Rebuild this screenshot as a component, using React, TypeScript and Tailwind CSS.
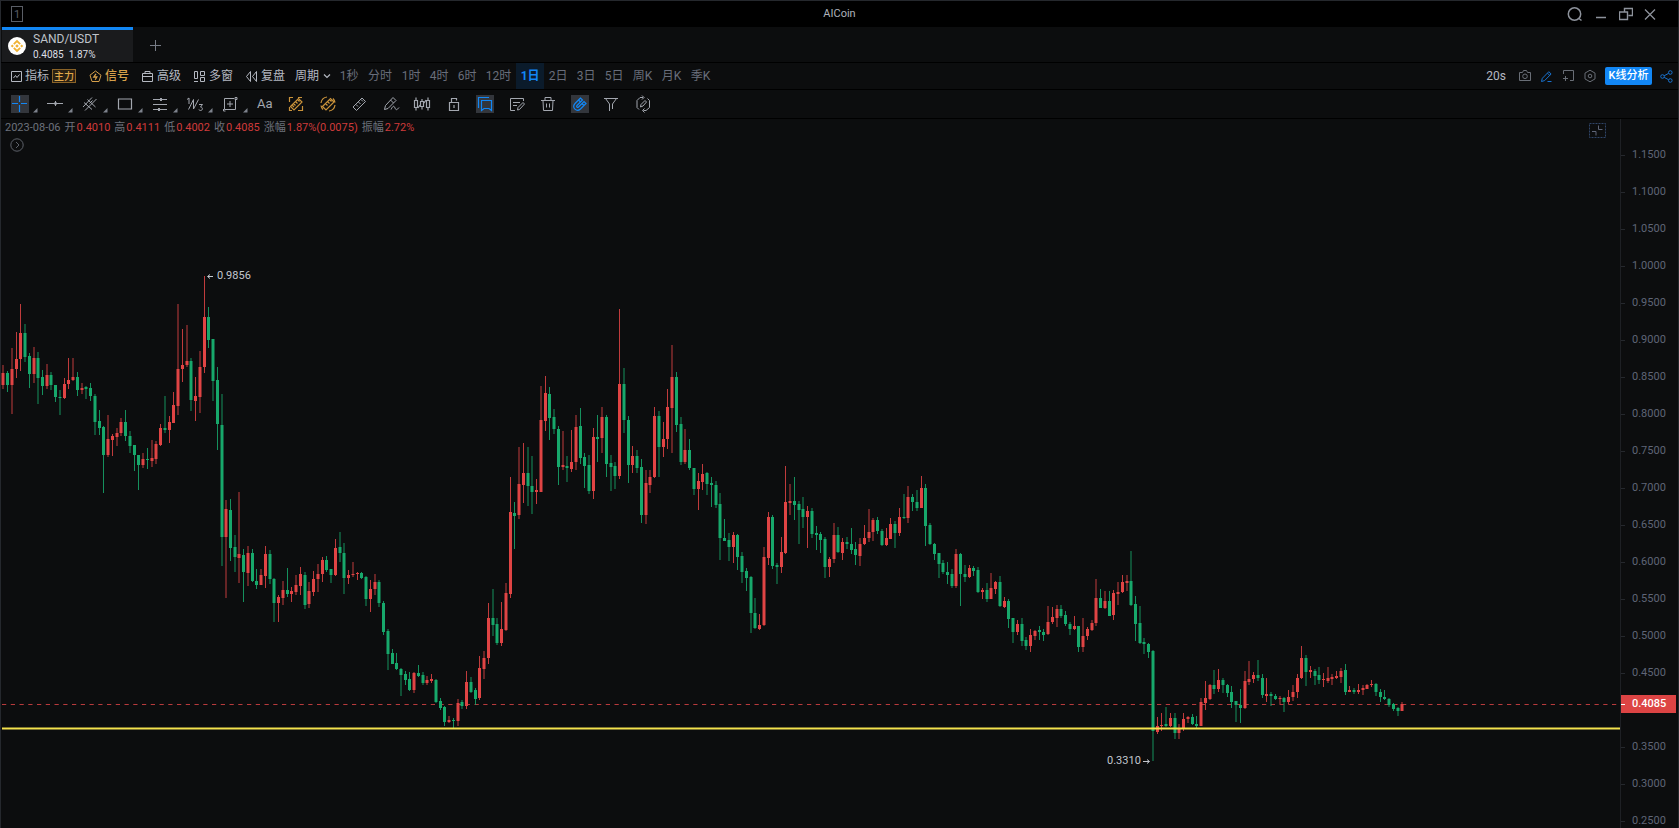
import React from 'react';
import clsx from 'clsx';

type IconProps = { children: React.ReactNode; size?: number; className?: string };

const Icon = ({ children, size = 18, className }: IconProps) => (
  <svg
    width={size}
    height={size}
    viewBox={`0 0 ${size} ${size}`}
    fill="none"
    stroke="currentColor"
    strokeWidth={1}
    className={clsx('shrink-0', className)}
    aria-hidden="true"
  >
    {children}
  </svg>
);

/* ---------- Candle data ---------- */

// Each candle: r/g, then high, body top, body bottom, low in thirds of a pixel below the block's base line
const BLOCKS = [
  {
    base: 141,
    rows:
      'r315,340,376,388 g332,340,376,395 r265,328,376,461 r217,297,328,353 r132,220,297,332 g193,220,290,307 g278,289,341,384 r262,293,341,370 g277,293,353,431 g331,351,378,404 ' +
      'r313,346,378,388 g335,346,376,389 g374,376,412,425 g391,412,415,465 r353,373,415,416 r295,359,373,387 r293,352,359,362 g337,351,391,408 r369,385,391,402 g378,381,386,416 ' +
      'g369,385,408,424 g402,408,486,524 g450,484,503,524 g498,501,586,698 r466,537,584,590 r521,529,539,587 r505,519,530,557 r473,487,520,527 g451,487,527,543 g513,528,557,580 ' +
      'g554,556,586,634 g584,585,614,690 r580,598,614,623 g564,598,601,626 r540,595,602,621 r544,553,597,612 r491,504,555,557 g408,503,510,520 r469,487,510,548 r396,435,488,490 ' +
      'r133,328,437,466 r207,315,328,365 r196,303,316,320 g293,303,420,453 r352,408,422,482 r274,322,410,458 r48,172,322,338 g140,172,240,263 g237,238,362,422 g321,359,493,569 ' +
      'g402,495,831,918 r721,747,830,1013 g717,749,863,903 g825,862,890,936 r697,883,893,969 g867,885,937,1025 r858,879,938,977 g866,879,963,966 g927,962,974,988 r928,946,974,976 ' +
      'r858,881,947,983 g870,881,957,972 g955,957,1028,1086 r1006,1011,1028,1087 r962,990,1013,1034 g924,990,1001,1010',
  },
  {
    base: 381,
    rows:
      'r261,273,281,306 r226,256,275,284 r201,223,258,285 g215,224,314,327 r247,273,311,323 r214,237,275,287 r192,221,238,276 r171,180,222,245 g168,180,209,215 g206,208,224,248 ' +
      'r118,143,224,227 g95,141,159,185 g130,158,233,281 r211,224,233,251 r187,221,225,231 r215,219,222,239 g216,219,234,237 g229,231,298,319 r240,266,298,335 r223,247,267,284 ' +
      'g241,247,308,320 g304,309,395,405 g388,393,461,510 g448,459,491,492 g459,489,507,509 g504,507,524,588 g513,522,540,556 g516,538,571,573 r515,520,571,580 g496,519,527,532 ' +
      'g517,525,549,556 r528,541,549,555 r522,538,543,549 g537,541,605,609 g594,604,624,629 g617,622,665,678 r648,660,665,670 g655,659,663,683 r597,610,662,677 g599,607,619,626 ' +
      'r514,546,617,626 g532,546,576,579 g565,570,597,615 r467,505,595,599 r454,473,507,536 r310,354,473,492 g267,354,375,407 g355,373,429,434 r307,388,428,437 r248,279,389,392',
  },
  {
    base: 171,
    rows:
      'r562,665,911,923 g636,668,677,776 r472,583,676,686 r460,549,584,639 g472,549,589,648 g499,588,605,673 r568,600,605,642 r289,390,605,607 r259,309,392,422 g291,311,383,449 ' +
      'g358,381,416,431 g408,416,530,584 r422,525,530,539 g498,528,535,577 r421,516,536,545 r376,410,517,539 g354,408,503,521 g490,502,527,594 g496,526,602,612 r415,442,602,627 ' +
      'g376,441,446,517 r352,381,445,488 g376,381,521,560 g495,519,530,602 g517,528,558,598 r57,283,558,568 g235,283,390,428 g379,390,524,578 r467,497,524,550 g479,497,533,549 ' +
      'g507,531,674,698 r539,580,674,703 r541,561,584,610 r350,377,561,565 g363,377,470,560 r396,447,470,501 r297,351,448,477 r166,261,353,490 g246,261,404,425 g381,403,515,524 ' +
      'r416,479,515,521 g447,479,534,541 g533,534,597,614 r549,573,597,661 r522,552,575,599 g545,549,582,614 g562,580,585,652 g573,584,645,655 g610,643,745,809 g687,744,752,754 ' +
      'g728,751,770,812 r727,736,771,818 g731,734,800,839 g787,798,845,880 g835,843,863,903 g859,861,970,1028 g924,969,1015,1017',
  },
  {
    base: 321,
    rows:
      'r522,555,566,570 r321,351,556,558 r217,231,353,374 g226,231,377,386 g370,375,380,431 r291,336,380,399 r78,186,338,342 r133,183,188,224 g111,183,195,240 g184,193,209,311 ' +
      'g171,207,230,264 r198,213,230,323 g205,213,281,293 g259,279,285,330 g277,283,299,338 g290,298,381,413 r352,357,381,411 r249,286,358,369 g261,286,337,338 r295,307,338,360 ' +
      'g292,306,313,326 g264,312,329,342 g306,327,346,374 r295,311,347,377 r255,293,312,314 r207,275,295,305 r234,240,276,302 g230,240,274,282 g268,273,314,317 r264,294,315,318 ' +
      'r235,252,296,298 g243,251,279,323 r205,231,279,287 g162,231,235,238 r137,172,234,249 g162,172,187,213 g150,186,203,212 r109,144,203,204 g132,144,258,318 g249,256,312,314 ' +
      'g310,312,342,359 g339,340,371,413 g359,369,396,403 g366,396,405,431 g388,402,437,443 r328,341,437,444 g340,342,402,498 g376,402,412,426 r376,385,412,414 g378,385,392,407 ' +
      'g380,390,456,458 r445,450,456,476 g428,450,476,486 r400,445,476,478 r422,427,446,461 g408,427,497,500 r471,483,500,503 g478,483,536,563',
  },
  {
    base: 411,
    rows:
      'g264,265,305,340 r270,283,305,314 g264,282,333,349 g321,330,347,360 r298,314,347,367 r301,303,318,331 g288,300,305,329 g297,305,315,333 r228,276,313,315 r231,261,276,282 ' +
      'r226,237,264,290 g224,237,257,263 g244,254,282,289 g276,282,298,315 r258,288,298,301 g288,289,350,366 r263,318,350,366 r291,297,318,330 r270,278,300,302 r148,204,279,287 ' +
      'g178,204,233,234 r183,213,234,237 g183,213,257,259 r179,189,256,269 r157,187,191,224 r134,157,187,190 r134,152,158,182 g63,152,225,228 g199,222,282,334 g227,280,338,342 ' +
      'g325,336,342,371 g339,341,365,383 g360,364,603,692 r561,588,606,613 r549,585,588,603 g531,582,588,591 r549,564,588,590 g549,564,610,626 r582,594,610,626 r549,567,597,603 ' +
      'r558,561,568,579 g552,561,582,585 g558,582,588,593 r504,517,587,589 r454,504,518,541 r462,464,507,510 g419,465,476,491 r417,450,476,487 g444,450,465,490 g462,464,489,501 ' +
      'g469,486,516,533 g513,514,525,577 g478,524,534,580 r423,454,535,538 r392,447,456,465 r427,435,447,459 g391,435,445,453 g433,443,496,503 r445,492,498,517',
  },
  {
    base: 481,
    rows:
      'g276,283,289,317 g281,288,297,301 r287,294,298,312 g291,293,305,335 r270,291,305,312 r254,275,292,302 r222,233,276,295 r138,175,235,237 g166,175,215,259 r199,211,216,235 ' +
      'g208,213,227,256 g202,226,239,252 r219,237,241,261 r201,235,242,248 r223,231,237,254 r213,228,233,237 r204,213,231,248 g193,211,275,284 r259,271,275,277 g264,270,275,283 ' +
      'r252,269,275,283 r256,264,271,286 r253,255,267,268 r240,251,255,261 g250,252,275,287 g267,275,292,305 g270,291,298,300 g294,296,316,320 g308,312,327,332 g320,324,332,347 ' +
      'r306,312,332,333',
  },
];

const CANDLES = BLOCKS.flatMap(({ base, rows }) =>
  rows.split(' ').map((row) => {
    const [high, top, bottom, low] = row
      .slice(1)
      .split(',')
      .map((v) => base + Math.round(Number(v) / 3));
    return { up: row[0] === 'r', high, top, bottom, low };
  }),
);

const STEP = 4.372;

const Candles = () => (
  <g>
    {CANDLES.map((c, i) => {
      const x = Math.round((2.15 + i * STEP) * 2) / 2;
      return (
        <g key={i} fill={c.up ? '#e04444' : '#17a86b'}>
          <rect x={x - 0.5} y={c.high} width={1} height={Math.max(c.low - c.high, 1)} opacity={0.85} />
          <rect x={x - 1.5} y={c.top} width={3} height={Math.max(c.bottom - c.top, 1)} />
        </g>
      );
    })}
  </g>
);

/* ---------- Title bar ---------- */

const TitleBar = () => (
  <header className="grid h-[26px] shrink-0 grid-cols-3 items-center bg-black text-[#8d929b]">
    <div className="ml-2.5 flex h-4 w-3 items-center justify-center border border-[#5a5e66] text-[11px] leading-none text-[#5a5e66]">1</div>
    <h1 className="pt-px text-center text-[11px] text-[#aeb2ba]">AICoin</h1>
    <div className="flex items-center justify-end gap-[11px] pr-[22px]">
      <button type="button" aria-label="搜索">
        <Icon size={16}>
          <circle cx="7.5" cy="8" r="6.2" strokeWidth={1.5} />
          <path d="M12 12.5l2.5 2" strokeWidth={1.5} />
        </Icon>
      </button>
      <button type="button" aria-label="最小化">
        <Icon size={14}>
          <path d="M2 10.5h10" strokeWidth={1.5} />
        </Icon>
      </button>
      <button type="button" aria-label="还原">
        <Icon size={14}>
          <path d="M5.5 4.5v-3h8v7h-4M.5 5h8v7.5h-8z" strokeWidth={1.4} />
        </Icon>
      </button>
      <button type="button" aria-label="关闭">
        <Icon size={12}>
          <path d="M1 1.5l10 10M11 1.5l-10 10" strokeWidth={1.3} />
        </Icon>
      </button>
    </div>
  </header>
);

const BinanceLogo = () => (
  <svg width="18" height="18" viewBox="0 0 18 18" className="shrink-0" aria-hidden="true">
    <circle cx="9" cy="9" r="9" fill="#fff" />
    <g fill="none" stroke="#f0b232" strokeWidth="1.8">
      <path d="M5.8 7.2L9 4l3.2 3.2M5.8 10.8L9 14l3.2-3.2" />
    </g>
    <path d="M9 7.2L10.8 9 9 10.8 7.2 9zM4.3 7.5L5.8 9l-1.5 1.5L2.8 9zM13.7 7.5L15.2 9l-1.5 1.5L12.2 9z" fill="#f0b232" />
  </svg>
);

const Tabs = () => (
  <div className="flex h-9 shrink-0 border-b border-black pl-px">
    <button type="button" className="flex w-[131px] items-center gap-[7px] border-t-[3px] border-[#1287f5] bg-[#1a1b1d] pl-1.5 text-left">
      <BinanceLogo />
      <span>
        <span className="block text-[12px] leading-4 text-[#bfc3ca]">SAND/USDT</span>
        <span className="block whitespace-pre text-[10px] leading-[15px] text-[#dcdfe4]">0.4085  1.87%</span>
      </span>
    </button>
    <button type="button" aria-label="新标签" className="ml-[15px] text-[#777c86]">
      <Icon size={14}>
        <path d="M7.5 2v11M2 7.5h11" />
      </Icon>
    </button>
  </div>
);

/* ---------- Period bar ---------- */

const PERIODS = [
  { label: '1秒', width: 'w-7' },
  { label: '分时', width: 'w-[34px]' },
  { label: '1时', width: 'w-7' },
  { label: '4时', width: 'w-7' },
  { label: '6时', width: 'w-7' },
  { label: '12时', width: 'w-[35px]' },
  { label: '1日', width: 'w-7' },
  { label: '2日', width: 'w-7' },
  { label: '3日', width: 'w-7' },
  { label: '5日', width: 'w-7' },
  { label: '周K', width: 'w-[29px]' },
  { label: '月K', width: 'w-[29px]' },
  { label: '季K', width: 'w-[29px]' },
];

const PeriodBar = () => (
  <nav className="flex h-[27px] shrink-0 items-center border-b border-black pl-[9px] pr-[5px] text-[12px] text-[#b4b8c1]">
    <button type="button" className="flex items-center gap-0.5">
      <Icon size={13}>
        <path d="M1.5 1.5h10v10h-10zM3.5 8l2-2.5 1.5 2 2.5-3" />
      </Icon>
      指标
    </button>
    <button type="button" className="ml-[3px] flex h-3.5 w-6 items-center justify-center border border-[#8a6327] bg-[#2a2013] text-[10px] font-medium text-[#e0a84a]">
      主力
    </button>
    <button type="button" className="ml-[13px] flex items-center gap-[3px] font-medium text-[#d6a04a]">
      <Icon size={13}>
        <path d="M6.5 1l5.5 4.2-2 6.3H3L1 5.2z" />
        <path d="M7 3.8L4.8 7h3L6.2 9.8" strokeWidth={1.3} />
      </Icon>
      信号
    </button>
    <button type="button" className="ml-3 flex items-center gap-[3px]">
      <Icon size={13}>
        <path d="M1.5 3.5h10v8h-10zM1.5 6.5h10M4 3.5v-2h5v2" />
      </Icon>
      高级
    </button>
    <button type="button" className="ml-3 flex items-center gap-[3px]">
      <Icon size={13}>
        <path d="M1.5 1.5h3v7h-3zM1 11.5h4M7.5 1.5h4v4h-4zM7.5 7.5h4v4h-4z" />
      </Icon>
      多窗
    </button>
    <button type="button" className="ml-3 flex items-center gap-[3px]">
      <Icon size={13}>
        <path d="M5.5 1.5v10L1.5 6.5zM11.5 1.5v10L7.5 6.5z" />
      </Icon>
      复盘
    </button>
    <button type="button" className="ml-[10px] flex w-10 items-center gap-1">
      周期
      <Icon size={8}>
        <path d="M1 2.5L4 5.5 7 2.5" strokeWidth={1.2} />
      </Icon>
    </button>
    <div className="flex h-full">
      {PERIODS.map(({ label, width }) => (
        <button
          key={label}
          type="button"
          className={clsx(
            'h-full whitespace-nowrap text-center',
            width,
            label === '1日' ? 'bg-[#0b1b2b] font-bold text-[#1287f5]' : 'text-[#696e7b]',
          )}
        >
          {label}
        </button>
      ))}
    </div>
    <div className="ml-auto flex items-center gap-2 text-[#696e76]">
      <span className="mr-1 text-[#b4b8c1]">20s</span>
      <button type="button" aria-label="截图">
        <Icon size={14}>
          <path d="M1.5 3.5h3l1-2h3l1 2h3v8h-11z" />
          <circle cx="7" cy="7.3" r="2.3" />
        </Icon>
      </button>
      <button type="button" aria-label="画线" className="text-[#1872cf]">
        <Icon size={13}>
          <path d="M1.5 11.5l.8-3.2 6.5-6.6 2.3 2.3-6.5 6.6zM7.5 3.2l2.2 2.2M7.5 11.5h4" />
        </Icon>
      </button>
      <button type="button" aria-label="添加窗口">
        <Icon size={14}>
          <path d="M2.5 5V1.5h10v10H9M4.5 7v5M2 9.5h5" />
        </Icon>
      </button>
      <button type="button" aria-label="设置">
        <Icon size={14}>
          <path d="M7 1.2l5 2.9v5.8l-5 2.9-5-2.9V4.1z" />
          <circle cx="7" cy="7" r="1.8" />
        </Icon>
      </button>
      <button type="button" className="h-[18px] w-[47px] shrink-0 whitespace-nowrap rounded-xs bg-[#1287f5] text-center text-[11px] font-medium leading-[18px] text-white">
        K线分析
      </button>
      <button type="button" aria-label="分享" className="text-[#1872cf]">
        <Icon size={13}>
          <circle cx="2.5" cy="6.5" r="1.8" />
          <circle cx="10.3" cy="2.5" r="1.8" />
          <circle cx="10.3" cy="10.5" r="1.8" />
          <path d="M4.2 5.7l4.4-2.3M4.2 7.4l4.4 2.3" />
        </Icon>
      </button>
    </div>
  </nav>
);

/* ---------- Drawing toolbar ---------- */

const MENU_TOOLS = [
  { name: '十字线', active: true, icon: <path d="M8.5 1v6M8.5 10v7M1 8.5h6M10 8.5h6" strokeWidth={1.2} /> },
  {
    name: '水平线',
    icon: (
      <>
        <path d="M1 8.5h16M9.5 6v5" />
        <path d="M8 8.5h3" strokeWidth={2} />
      </>
    ),
  },
  { name: '平行线', icon: <path d="M2 12L11 2.5M4 15.5L15.5 4M3 7.5l8 7M6.5 4.5l8 7.5M8.5 8.5l3-3" /> },
  { name: '矩形', icon: <path d="M2.5 4h13v10h-13z" strokeWidth={1.2} /> },
  {
    name: '斐波那契',
    icon: (
      <>
        <path d="M2 4.5h14M2 9.5h14M2 14.5h14" />
        <path d="M10 3v3M8 13v3" strokeWidth={2} />
      </>
    ),
  },
  {
    name: '波浪',
    icon: (
      <>
        <path d="M1 4.5L3 3v6M2.5 14.5l5-10v9.500l5-9.500" />
        <path d="M13 9.500h3.500L14.500 12c2.500 0 2.500 3.500 0 3.500-1 0-1.500-.5-1.500-1" />
      </>
    ),
  },
  { name: '测量', icon: <path d="M13 3.5H3.500v11h11V5M9 6v6M6 9h6M14 2.500h2v2h-2zM2.500 14v2h2" /> },
];

const TOOLS = [
  { name: '文字', icon: null },
  {
    name: '智能画线',
    tone: 'text-[#c9923a]',
    icon: <path d="M2.5 7V2.500H6M11 2.500h4M15.500 11v4.500H11M2.500 12v3.500H5M3.500 11.500l8-8 3.500 3.500-8 8zM6.500 8.500l2 2M8.500 6.500l2 2M10.500 4.500l2 2M5 10l2 2" strokeWidth={1.2} />,
  },
  {
    name: '智能形态',
    tone: 'text-[#c9923a]',
    icon: <path d="M2 8a7 7 0 016-6M16 10a7 7 0 01-6 6M3.500 11.500l8-8 3.500 3.500-8 8zM6.500 8.500l2 2M8.500 6.500l2 2M10.500 4.500l2 2M2 10.500a7 7 0 002 4M16 7.500a7 7 0 00-2-4" strokeWidth={1.2} />,
  },
  { name: '标尺', icon: <path d="M3 12l9-9 3.500 3.500-9 9zM6 9.500l2 2M8.500 7l2 2M11 4.500l2 2" /> },
  { name: '画笔', icon: <path d="M2.500 14.500l1-4 7.500-8 3 3-8 8zM8.500 5l3 3M9 14.500c2-4 3-4 4-1.500s2 2 4-.5" /> },
  {
    name: 'K线样式',
    icon: (
      <path
        d="M1.500 5.500h3v7h-3zM7.500 6.500h3v5h-3zM13.500 5.500h3v7h-3zM3 2.500v3M3 12.500v3M9 4v2.500M9 11.500v3M15 2.500v3M15 12.500v3M5 13l2-3M11 8l2-3"
        strokeWidth={1.2}
      />
    ),
  },
  { name: '锁定', icon: <path d="M4.500 7.500h9v8h-9zM6.500 7.500v-4h5v2M9 10v3" strokeWidth={1.2} /> },
  { name: '收藏', active: true, icon: <path d="M2.500 13V2.500H13M5.500 5.500h10v10l-2.500-2H8l-2.500 2z" strokeWidth={1.2} /> },
  { name: '备注', icon: <path d="M15.500 6V3.500h-13v12H7M5 7.500h7M5 10.500h4M9.500 15l.5-2.500 5-5 1.500 1.500-5 5.500z" /> },
  { name: '删除', icon: <path d="M2 5.500h14M6 5.500v-3h6v3M4 5.500l.5 10h9l.5-10M7.500 8.500v4M10.500 8.500v4" /> },
  {
    name: '磁吸',
    active: true,
    icon: <path d="M9.500 3L4 8.500c-3.500 4 1.500 9 5.500 5.500L15 8.500l-2-2L7.500 12c-1.200 1-2.500-.3-1.500-1.500L11.500 5zM7.500 5l2 2M11 8.500l2 2" strokeWidth={1.2} />,
  },
  { name: '筛选', icon: <path d="M2 3.500h14M3.500 3.500L7.500 9v7M14.500 3.500L10.500 9v5" /> },
  {
    name: '重置',
    icon: <path d="M9 2.500H6L3 5.500v7l2 2M9.500 15.500H12l3.500-3v-7l-2-2M8 .5l2 2-2 2M10.500 17.500l-2-2 2-2M6.500 12l.5-2.500L11 5.500 12.500 7 9 11z" />,
  },
];

const Toolbar = () => (
  <div className="flex h-[29px] shrink-0 items-center border-b border-black pl-2.5 text-[#a3a7af]">
    {MENU_TOOLS.map(({ name, active, icon }) => (
      <button key={name} type="button" aria-label={name} className="flex w-[35px] items-end gap-1">
        <span className={clsx(active && 'bg-[#33363c] text-[#1287f5]')}>
          <Icon>{icon}</Icon>
        </span>
        <svg width="5" height="5" viewBox="0 0 5 5" className="fill-[#7d828c]" aria-hidden="true">
          <path d="M4.500 0v4.500H0z" />
        </svg>
      </button>
    ))}
    <div className="flex w-[409px]">
      {TOOLS.map(({ name, active, tone, icon }) => (
        <button key={name} type="button" aria-label={name} className={clsx('flex flex-1', tone)}>
          {icon ? (
            <span className={clsx(active && 'bg-[#33363c] text-[#1287f5]')}>
              <Icon>{icon}</Icon>
            </span>
          ) : (
            <span className="pl-px text-[13px] leading-[18px]">Aa</span>
          )}
        </button>
      ))}
    </div>
  </div>
);

/* ---------- Chart ---------- */

const QUOTE = [
  ['开', '0.4010'],
  ['高', '0.4111'],
  ['低', '0.4002'],
  ['收', '0.4085'],
  ['涨幅', '1.87%(0.0075)'],
  ['振幅', '2.72%'],
];

const QuoteLine = () => (
  <div className="flex gap-1 pl-1 text-[11px] leading-4 text-[#6d727c]">
    <span>2023-08-06</span>
    {QUOTE.map(([label, value]) => (
      <span key={label} className="flex gap-px">
        {label}
        <span className="text-[#cf3b3b]">{value}</span>
      </span>
    ))}
  </div>
);

const AXIS = Array.from({ length: 19 }, (_, i) => (1.15 - i * 0.05).toFixed(4));

// the last-price tag sits on this row
const COVERED = '0.4000';

const PriceAxis = () => (
  <aside className="relative w-[58px] shrink-0 overflow-hidden border-l border-[#1e2024] pt-[18px]">
    <ul className="text-[11px] text-[#5f6577]">
      {AXIS.map((price) => (
        <li key={price} className="flex h-[37px] items-center gap-[7px]">
          <span className="h-px w-1 bg-[#25282d]" />
          {price !== COVERED && price}
        </li>
      ))}
    </ul>
    <div className="absolute -left-px top-[576px] flex h-[18px] w-14 items-center gap-[7px] bg-[#dd4444] text-[11px] font-medium text-white">
      <span className="h-px w-[5px] bg-white" />
      0.4085
    </div>
  </aside>
);

const Chart = () => (
  <main className="flex min-h-0 flex-1">
    <section className="relative min-w-0 flex-1 overflow-hidden">
      <svg className="absolute inset-0 h-full w-full" role="img" aria-label="SAND/USDT 日K线">
        <line x1="1" x2="100%" y1="585.5" y2="585.5" stroke="#b83a3c" strokeDasharray="4.25 4.5" />
        <Candles />
        <line x1="1" x2="100%" y1="609.5" y2="609.5" stroke="#f3e24d" strokeWidth="2" />
        <g fill="#c3c7ce" fontSize="11">
          <text x="216" y="160">0.9856</text>
          <text x="1106" y="645">0.3310</text>
        </g>
        <path d="M212 157.5h-5M209 155.500l-2.500 2 2.500 2M1142 642.500h6M1146 640.500l2.500 2-2.500 2" fill="none" stroke="#c3c7ce" />
      </svg>
      <div className="relative pt-px">
        <QuoteLine />
        <button type="button" aria-label="展开指标" className="ml-[9px] mt-0.5 block text-[#5d6169]">
          <Icon size={14}>
            <circle cx="7" cy="7" r="6.2" />
            <path d="M6 4l3 3-3 3" />
          </Icon>
        </button>
      </div>
      <button type="button" aria-label="缩小" className="absolute right-3.5 top-1 text-[#5f6577]">
        <Icon size={17}>
          <path d="M.5.5h16v14H.5z" stroke="#2f4568" strokeDasharray="2 1" />
          <path d="M9.500 2.500v4h4M3 8.500h4v4" />
        </Icon>
      </button>
    </section>
    <PriceAxis />
  </main>
);

export default function App() {
  return (
    <div className="flex h-screen flex-col overflow-hidden border-x border-t border-[#25282d] bg-[#0c0d0e] font-['Roboto','Noto_Sans_CJK_SC',sans-serif]">
      <TitleBar />
      <Tabs />
      <PeriodBar />
      <Toolbar />
      <Chart />
    </div>
  );
}
